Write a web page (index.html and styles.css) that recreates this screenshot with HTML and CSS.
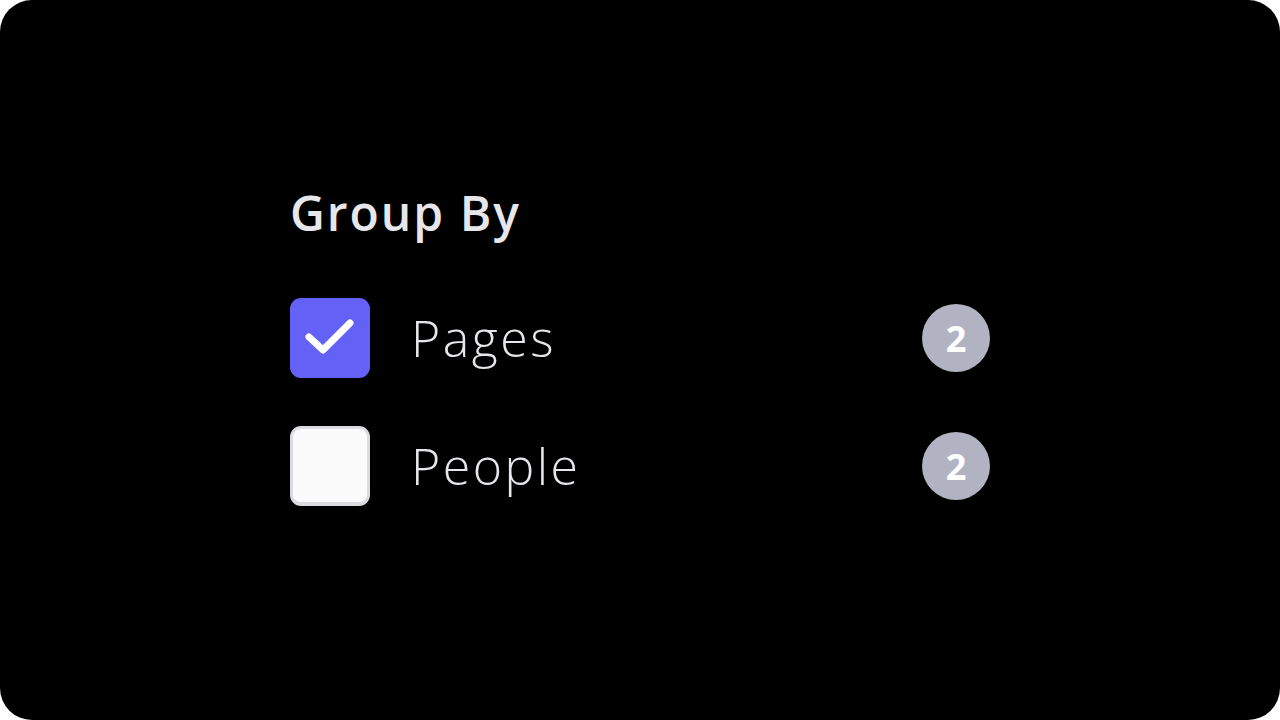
FILE: index.html
```html
<!DOCTYPE html>
<html>
<head>
<meta charset="utf-8">
<link rel="stylesheet" href="styles.css">
</head>
<body>
<div class="frame">
  <div class="panel">
    <h1 class="title">Group By</h1>
    <div class="list">
      <div class="row">
        <div class="box box-checked">
          <svg width="80" height="80" viewBox="0 0 80 80"><path d="M19 39 L33 52 L60 25" fill="none" stroke="#ffffff" stroke-width="7" stroke-linecap="round" stroke-linejoin="round"/></svg>
        </div>
        <span class="label">Pages</span>
        <span class="badge">2</span>
      </div>
      <div class="row">
        <div class="box box-empty"></div>
        <span class="label">People</span>
        <span class="badge">2</span>
      </div>
    </div>
  </div>
</div>
</body>
</html>
```
FILE: styles.css
```css
html, body {
  margin: 0;
  padding: 0;
  background: #ffffff;
}
.frame {
  width: 1280px;
  height: 720px;
  background: #000000;
  border-radius: 32px;
  box-sizing: border-box;
  padding: 185px 290px 0 290px;
  font-family: "Open Sans", "Liberation Sans", sans-serif;
}
.panel {
  width: 700px;
}
.title {
  margin: 0;
  font-size: 48px;
  line-height: 56px;
  font-weight: 600;
  color: #e7e7eb;
  letter-spacing: 2px;
}
.list {
  margin-top: 57px;
  display: flex;
  flex-direction: column;
  gap: 48px;
}
.row {
  display: flex;
  align-items: center;
  height: 80px;
}
.box {
  width: 80px;
  height: 80px;
  border-radius: 11px;
  box-sizing: border-box;
  flex: none;
}
.box svg {
  display: block;
}
.box-checked {
  background: #6361f6;
}
.box-empty {
  background: #fbfbfb;
  border: 3px solid #dcdce0;
  border-bottom-width: 4px;
}
.label {
  margin-left: 41px;
  font-size: 50px;
  font-weight: 300;
  color: #e7e7eb;
  letter-spacing: 2.5px;
  flex: 1;
}
.badge {
  width: 68px;
  height: 68px;
  border-radius: 50%;
  background: #b1b3c3;
  color: #ffffff;
  font-weight: 700;
  font-size: 36px;
  display: flex;
  align-items: center;
  justify-content: center;
  flex: none;
}
```
